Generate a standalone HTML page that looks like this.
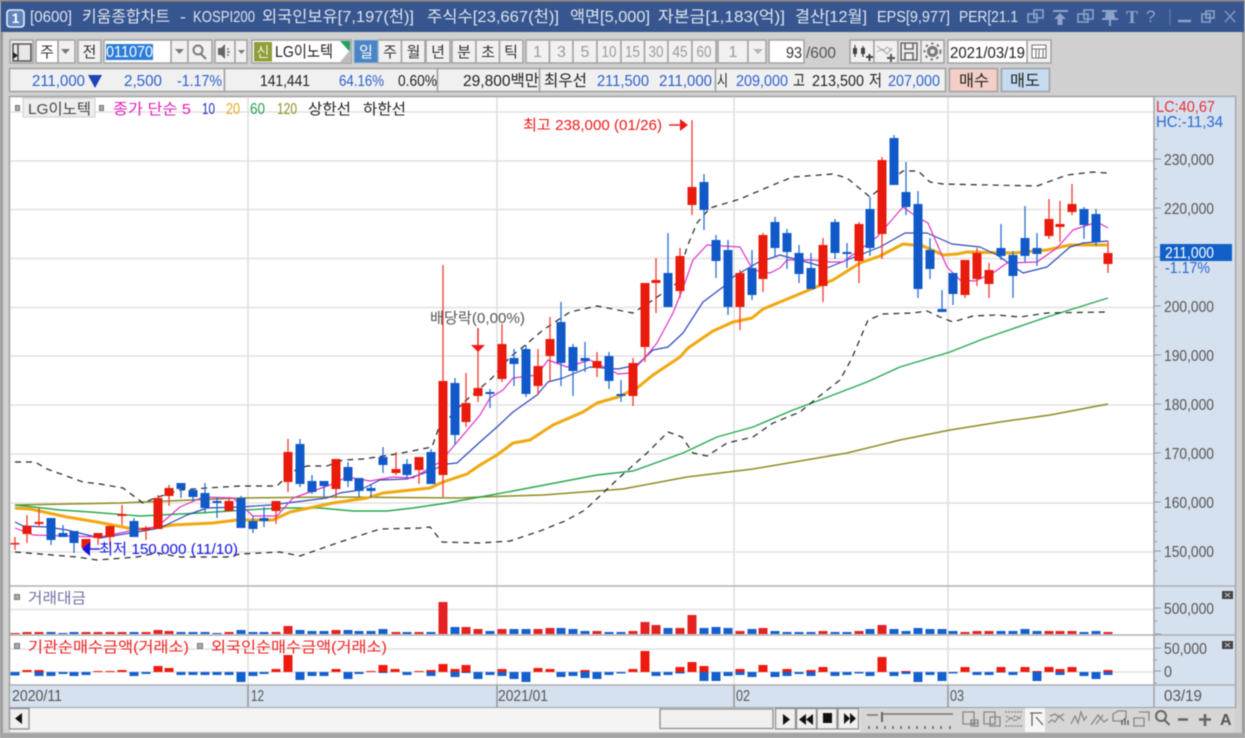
<!DOCTYPE html>
<html><head><meta charset="utf-8"><title>키움종합차트</title>
<style>
html,body{margin:0;padding:0;background:#d0d0d0;width:1245px;height:738px;overflow:hidden}
svg{display:block;filter:blur(.4px);font-size:16px}
text{font-family:"Liberation Sans","Noto Sans CJK KR",sans-serif}
.l{fill:none;stroke-linejoin:round}
</style></head><body>
<svg width="1245" height="738" viewBox="0 0 1245 738" xmlns="http://www.w3.org/2000/svg">
<rect width="1245" height="738" fill="#d0d0d0"/>
<rect x="0" y="0" width="3" height="738" fill="#9c9c9c"/>
<rect x="1242" y="0" width="3" height="738" fill="#9c9c9c"/>
<rect x="0" y="733" width="1245" height="5" fill="#a4a4a4"/>
<rect width="1245" height="2" fill="#777"/>
<rect x="1" y="2" width="1243" height="30" fill="#37568f"/>
<!-- title -->
<rect x="7" y="10" width="17" height="17" rx="3" fill="#5f83bd" stroke="#e8eef6" stroke-width="1.6"/>
<text x="15.5" y="23" text-anchor="middle" fill="#fff" font-weight="bold" style="font-size:14px">1</text>
<g fill="#dde4f0">
<text x="30" y="22" textLength="42" lengthAdjust="spacingAndGlyphs">[0600]</text>
<text x="82" y="22" textLength="88" lengthAdjust="spacingAndGlyphs">키움종합차트</text>
<text x="180" y="22" textLength="6" lengthAdjust="spacingAndGlyphs">-</text>
<text x="193" y="22" textLength="62" lengthAdjust="spacingAndGlyphs">KOSPI200</text>
<text x="262" y="22" textLength="152" lengthAdjust="spacingAndGlyphs">외국인보유[7,197(천)]</text>
<text x="427" y="22" textLength="132" lengthAdjust="spacingAndGlyphs">주식수[23,667(천)]</text>
<text x="570" y="22" textLength="80" lengthAdjust="spacingAndGlyphs">액면[5,000]</text>
<text x="658" y="22" textLength="127" lengthAdjust="spacingAndGlyphs">자본금[1,183(억)]</text>
<text x="795" y="22" textLength="72" lengthAdjust="spacingAndGlyphs">결산[12월]</text>
<text x="877" y="22" textLength="73" lengthAdjust="spacingAndGlyphs">EPS[9,977]</text>
<text x="959" y="22" textLength="59" lengthAdjust="spacingAndGlyphs">PER[21.1</text>
</g>
<!-- title icons -->
<g fill="none" stroke="#8ea3cb" stroke-width="1.6">
<path d="M1034 10h9v8h-9zM1028 14h9v8h-9z"/>
<path d="M1053 11h15" stroke-width="2"/>
<path d="M1084 10h9v9h-9zM1078 14h10v8h-10z"/>
<path d="M1170 9v16" stroke="#6a82ae" stroke-width="1"/>
<path d="M1178 21h13" stroke-width="2.4"/>
<path d="M1206 11h8v7h-8zM1202 14h8v8h-8z"/>
<path d="M1225 11l10 11M1235 11l-10 11" stroke="#7f94bc"/>
</g>
<path d="M1060 13l6 6h-3.500v6h-5v-6h-3.500z" fill="#8ea3cb"/>
<path d="M1102 10h15v2h-3l1 6h3v2h-7v6h-2v-6h-7v-2h3l1-6h-4z" fill="#8ea3cb"/>
<text x="1126" y="23" fill="#8ea3cb" font-weight="bold" style="font-family:'Liberation Serif',serif;font-size:18px">T</text>
<text x="1146" y="22" fill="#8ea3cb" style="font-size:17px">?</text>

<!-- toolbar -->
<g fill="#f1f1f1" stroke="#a2a2a2" stroke-width="1.5">
<rect x="10" y="40" width="23" height="23"/>
<rect x="58" y="40" width="17" height="23"/>
<rect x="78" y="40" width="23" height="23"/>
<rect x="171" y="40" width="17" height="23"/>
<rect x="188" y="40" width="24" height="23"/>
<rect x="215" y="40" width="20" height="23"/>
<rect x="235" y="40" width="12" height="23"/>
<rect x="378" y="40" width="23.500" height="23"/>
<rect x="401.500" y="40" width="23.500" height="23"/>
<rect x="426" y="40" width="24" height="23"/>
<rect x="452" y="40" width="24" height="23"/>
<rect x="476" y="40" width="23.500" height="23"/>
<rect x="499.500" y="40" width="23.500" height="23"/>
<rect x="526" y="40" width="23.500" height="23"/>
<rect x="549.500" y="40" width="23.500" height="23"/>
<rect x="573" y="40" width="24" height="23"/>
<rect x="597" y="40" width="24" height="23"/>
<rect x="621" y="40" width="23.500" height="23"/>
<rect x="644.500" y="40" width="23.500" height="23"/>
<rect x="668" y="40" width="24" height="23"/>
<rect x="692" y="40" width="24" height="23"/>
<rect x="718" y="40" width="30" height="23"/>
<rect x="748" y="40" width="18" height="23"/>
<rect x="850" y="40" width="24" height="23"/>
<rect x="874" y="40" width="24" height="23"/>
<rect x="898" y="40" width="23" height="23"/>
<rect x="921" y="40" width="23" height="23"/>
<rect x="1027" y="40" width="24" height="23"/>
</g>
<g fill="#fff" stroke="#a2a2a2" stroke-width="1.5">
<rect x="36" y="40" width="22" height="23"/>
<rect x="104" y="40" width="67" height="23"/>
<rect x="252" y="40" width="99" height="23"/>
<rect x="769" y="40" width="35" height="23"/>
<rect x="948" y="40" width="79" height="23"/>
</g>
<rect x="354" y="40" width="24" height="23" fill="#4a86c6" stroke="#9fb8d4"/>
<rect x="106" y="44" width="47" height="16" fill="#2d7cd8"/>
<text x="106" y="57" textLength="47" lengthAdjust="spacingAndGlyphs" fill="#fff">011070</text>
<rect x="254" y="42" width="18" height="19.500" fill="#8f9e38"/>
<text x="263" y="57" text-anchor="middle" fill="#f1f3d8" style="font-size:14px">신</text>
<path d="M340 41h10v11z" fill="#1fa35b"/><path d="M350 50v12h-10z" fill="#bcbcbc"/>
<text x="275" y="57" textLength="58" lengthAdjust="spacingAndGlyphs" fill="#222">LG이노텍</text>
<g fill="#333" text-anchor="middle" style="font-size:15px">
<text x="47" y="57">주</text><text x="89.500" y="57">전</text>
<text x="390" y="57">주</text><text x="413.500" y="57">월</text><text x="438" y="57">년</text>
<text x="464" y="57">분</text><text x="488" y="57">초</text><text x="511" y="57">틱</text>
</g>
<text x="366" y="57" text-anchor="middle" fill="#fff" style="font-size:15px">일</text>
<g fill="#9a9a9a" text-anchor="middle">
<text x="537.500" y="57">1</text><text x="561.500" y="57">3</text><text x="585" y="57">5</text>
<text x="609" y="57" textLength="15" lengthAdjust="spacingAndGlyphs">10</text>
<text x="632.500" y="57" textLength="15" lengthAdjust="spacingAndGlyphs">15</text>
<text x="656" y="57" textLength="15" lengthAdjust="spacingAndGlyphs">30</text>
<text x="680" y="57" textLength="15" lengthAdjust="spacingAndGlyphs">45</text>
<text x="704" y="57" textLength="15" lengthAdjust="spacingAndGlyphs">60</text>
<text x="733" y="57">1</text>
</g>
<text x="786" y="58" textLength="16" lengthAdjust="spacingAndGlyphs" fill="#333">93</text>
<text x="806" y="58" textLength="30" lengthAdjust="spacingAndGlyphs" fill="#555">/600</text>
<text x="950" y="58" textLength="75" lengthAdjust="spacingAndGlyphs" fill="#222">2021/03/19</text>
<g fill="#777">
<path d="M61 49h9l-4.500 5z"/><path d="M175 49h9l-4.500 5z"/><path d="M238 50h7l-3.500 4z"/>
<path d="M753 49h10l-5 5z" fill="#b5b5b5"/>
</g>
<!-- search -->
<g fill="none" stroke="#7c7c7c" stroke-width="2">
<circle cx="198" cy="50" r="4.500"/><path d="M201 54l5 5"/>
</g>
<!-- speaker -->
<path d="M218 48h3l4-4v15l-4-4h-3z" fill="#666"/><path d="M227 49h2M227 52h3M227 55h2" stroke="#777" stroke-width="1.500"/>
<!-- panel icon -->
<path d="M13 44h18v17h-18z M18 44v17" fill="#e8e8e8" stroke="#555" stroke-width="1.600"/>
<path d="M13 52l5 3.500-5 3.500z" fill="#222"/>
<!-- tool icons -->
<path d="M855 45v12M863 46v11" stroke="#444" stroke-width="1.200"/>
<path d="M853 48h4v6h-4zM861 48h4v6h-4z" fill="#444"/>
<path d="M866 57h7M869.500 54v7" stroke="#444" stroke-width="2"/>
<path d="M877 46l6 5 4-4 5 4M877 52l5-3 5 5 5-6" fill="none" stroke="#aaa" stroke-width="1"/>
<path d="M887 58h8M891 54v8" stroke="#555" stroke-width="2"/>
<path d="M901 43h16v17h-16z M905 43v6h8v-6 M905 60v-7h8v7" fill="none" stroke="#666" stroke-width="1.600"/>
<circle cx="932.500" cy="51.500" r="5.500" fill="#7a7a7a"/><circle cx="932.500" cy="51.500" r="8" fill="none" stroke="#7a7a7a" stroke-width="2" stroke-dasharray="2.500 3.500"/><circle cx="932.500" cy="51.500" r="2.300" fill="#eee"/>
<path d="M1032 45h14v13h-14z M1032 49h14M1036 49v9M1039 49v9M1043 49v9" fill="#fff" stroke="#777" stroke-width="1.100"/>

<!-- info row -->
<g fill="#f0f0f0" stroke="#a0a0a0" stroke-width="1.500">
<rect x="9.500" y="68.500" width="215" height="23"/>
<rect x="224.500" y="68.500" width="213" height="23"/>
<rect x="437.500" y="68.500" width="102" height="23"/>
<rect x="539.500" y="68.500" width="176" height="23"/>
<rect x="715.500" y="68.500" width="230" height="23"/>
<rect x="949.500" y="68.500" width="48" height="23" fill="#f3cfc8"/>
<rect x="1001.500" y="68.500" width="48" height="23" fill="#c5dcf0"/>
</g>
<g fill="#2a5fcf">
<text x="32" y="86" textLength="53" lengthAdjust="spacingAndGlyphs">211,000</text>
<text x="124" y="86" textLength="38" lengthAdjust="spacingAndGlyphs">2,500</text>
<text x="177" y="86" textLength="45" lengthAdjust="spacingAndGlyphs">-1.17%</text>
<text x="339" y="86" textLength="45" lengthAdjust="spacingAndGlyphs">64.16%</text>
<text x="597" y="86" textLength="52" lengthAdjust="spacingAndGlyphs">211,500</text>
<text x="659" y="86" textLength="53" lengthAdjust="spacingAndGlyphs">211,000</text>
<text x="736" y="86" textLength="52" lengthAdjust="spacingAndGlyphs">209,000</text>
<text x="888" y="86" textLength="52" lengthAdjust="spacingAndGlyphs">207,000</text>
</g>
<g fill="#222">
<text x="260" y="86" textLength="50" lengthAdjust="spacingAndGlyphs">141,441</text>
<text x="398" y="86" textLength="39" lengthAdjust="spacingAndGlyphs">0.60%</text>
<text x="463" y="86" textLength="76" lengthAdjust="spacingAndGlyphs">29,800백만</text>
<text x="544" y="86" textLength="43" lengthAdjust="spacingAndGlyphs">최우선</text>
<text x="717" y="86" textLength="11" lengthAdjust="spacingAndGlyphs">시</text>
<text x="793" y="86" textLength="12" lengthAdjust="spacingAndGlyphs">고</text>
<text x="812" y="86" textLength="52" lengthAdjust="spacingAndGlyphs">213,500</text>
<text x="869" y="86" textLength="13" lengthAdjust="spacingAndGlyphs">저</text>
<text x="959" y="86" textLength="30" lengthAdjust="spacingAndGlyphs">매수</text>
<text x="1010" y="86" textLength="30" lengthAdjust="spacingAndGlyphs">매도</text>
</g>
<path d="M88 75h14l-7 13z" fill="#1c45b8"/>

<!-- chart frame -->
<rect x="9.500" y="96.500" width="1226" height="611" fill="#fff" stroke="#a0a0a0" stroke-width="1.500"/>
<rect x="1154" y="97" width="81" height="610" fill="#d6e1ef"/>
<rect x="10" y="685" width="1144" height="22" fill="#d6e1ef"/>
<g stroke="#e2e2e2" stroke-width="1.500" fill="none">
<path d="M10 112H1154M10 161H1154M10 209.500H1154M10 258.500H1154M10 307.500H1154M10 356H1154M10 405H1154M10 454H1154M10 503H1154M10 552H1154"/>
<path d="M10 609.500H1154M10 649H1154M10 672H1154" stroke="#e0e0e0"/>
<path d="M248 97V685M497 97V685M734 97V685M948 97V685" stroke="#dedede"/>
</g>

<!-- lines -->
<polyline class="l" stroke="#8c8c20" stroke-width="1.500" points="15,505 120,503 240,498 330,497 460,498 480,497 543,495 623,489 687,477 753,469 847,453 900,440 950,430 1000,422 1050,415 1108,404"/>
<polyline class="l" stroke="#28a850" stroke-width="1.400" points="15,505 60,510 90,512 140,516 200,513 245,510 283,508 320,508 353,511 387,511 413,508 447,503 480,497 513,491 597,475 633,471 683,453 717,437 753,427 793,410 820,400 867,382 900,367 950,352 983,339 1047,317 1108,298"/>
<polyline class="l" stroke="#f0a810" stroke-width="3" points="15,508 30,509 67,517 97,522 133,529 147,529 173,525 213,523 237,520 273,520 290,512 333,503 367,498 383,493 430,488 443,482 467,474 480,465 497,455 513,443 530,440 553,425 583,412 597,403 618,397 637,388 653,375 680,357 688,348 713,331 733,322 752,318 763,309 797,295 833,280 860,263 880,256 903,244 923,246 943,255 957,254 967,252 1013,253 1047,250 1070,245 1107,245"/>
<polyline class="l" stroke="#3048b8" stroke-width="1.200" points="15,522 23,526 47,527 67,530 100,538 143,531 160,528 187,515 207,508 240,507 270,505 287,503 327,498 340,493 360,490 380,480 407,479 427,472 447,464 457,463 480,442 497,427 513,412 537,395 548,382 563,378 590,367 618,369 637,365 653,350 668,347 683,333 703,302 723,287 733,277 757,263 780,255 810,263 827,268 847,260 880,247 905,233 927,233 952,244 980,247 997,255 1023,273 1047,267 1070,247 1083,243 1108,241"/>
<polyline class="l" stroke="#e030c8" stroke-width="1.200" points="15,528 33,535 67,536 100,537 140,529 157,527 180,507 203,497 233,498 253,516 277,516 293,498 330,485 347,477 370,481 393,477 413,478 440,462 453,447 480,415 490,398 503,390 513,378 537,375 548,360 567,367 590,360 618,374 630,373 643,360 657,343 673,313 683,288 693,260 707,245 740,247 753,270 770,273 780,268 787,260 813,260 830,262 843,262 877,237 903,207 917,217 928,223 947,267 960,280 975,281 993,273 1007,263 1037,262 1057,248 1073,230 1097,222 1108,228"/>
<g class="l" stroke="#222" stroke-width="1.200" stroke-dasharray="6 5">
<polyline class="l" points="15,462 35,462 47,469 83,482 100,484 123,488 143,503 155,498 180,490 207,488 240,486 277,486 280,483 297,469 307,466 327,466 343,460 363,459 397,454 432,447 438,430 463,403 492,378 510,357 523,347 543,330 570,312 597,306 633,313 653,300 677,283 687,247 697,223 710,208 740,199 780,182 793,177 833,174 847,178 870,197 887,183 903,171 918,171 930,182 943,184 1037,186 1067,175 1093,172 1107,173"/>
<polyline class="l" points="15,552 77,557 97,560 137,557 157,553 180,557 227,557 240,554 280,552 300,556 337,543 380,529 420,528 430,527 442,542 480,543 510,541 540,531 565,521 585,510 620,477 647,453 668,432 682,437 693,453 707,456 727,443 753,437 773,423 800,412 817,398 840,380 852,358 868,320 883,314 913,313 927,311 940,317 953,322 973,316 997,315 1020,317 1047,313 1107,312"/>
</g>

<!-- candles: wicks -->
<path fill="none" stroke="#ee3b30" stroke-width="1.300" d="M15 537V550M27 515V543M39 508V527M86 539V553M98 533V545M110 526V547M122 505V525M146 526V540M158 495V529M169 485V506M229 497V511M276 501V524M288 439V492M336 459V498M396 452V475M419 457V484M443 265V497M466 373V427M478 346V402M502 324V382M538 349V395M550 317V382M597 352V377M633 358V406M645 283V362M656 258V313M680 248V298M692 120V215M740 270V330M763 233V292M823 238V302M859 222V283M882 157V259M965 260V298M977 248V286M989 263V298M1049 199V239M1060 201V242M1072 184V215M1108 241V273"/>
<path fill="none" stroke="#2a70d0" stroke-width="1.300" d="M51 518V545M63 525V537M74 531V553M134 518V537M181 483V498M193 488V501M205 483V512M217 497V518M241 496V528M253 516V533M264 507V527M300 439V487M312 475V494M324 481V497M348 462V487M359 478V497M371 485V498M383 447V473M407 459V478M431 449V484M455 378V445M490 389V408M514 349V386M526 345V397M561 302V386M573 344V396M585 342V372M609 352V389M621 380V402M668 233V307M704 174V230M716 235V278M728 240V315M752 250V300M775 217V257M787 229V269M799 245V283M811 253V289M835 219V259M847 243V268M870 197V256M894 135V185M906 162V215M918 191V298M930 238V279M942 290V312M953 273V305M1001 224V260M1013 251V298M1025 206V262M1037 233V266M1084 207V239M1096 209V246"/>
<!-- candles: bodies -->
<path fill="none" stroke="#e81b0c" stroke-width="9" d="M27 526V534M86 539V548M98 533V538M110 526V537M158 498V529M169 488V496M229 501V511M276 501V511M288 452V482M336 459V489M419 457V470M443 381V475M466 403V422M478 388V396M502 344V379M538 366V386M550 339V356M597 361V368M633 363V396M645 283V347M680 256V291M692 187V205M740 273V307M763 235V279M823 245V286M859 224V261M882 160V234M965 260V295M977 253V279M989 270V284M1049 219V236M1072 204V212M1108 253V264M15 543V544.500M39 522V524M122 514V516M146 528V530M396 469V473M656 280V283M1060 224V227"/>
<path fill="none" stroke="#1159c8" stroke-width="9" d="M51 518V540M63 533V537M74 531V543M134 521V537M181 483V489M193 490V497M205 493V508M217 501V503M241 498V528M253 521V529M264 518V521M300 444V484M312 481V492M324 481V486M348 467V481M359 478V491M371 488V491M383 457V465M407 464V475M431 452V484M455 383V435M490 392V394M514 358V364M526 349V394M561 322V363M573 347V371M585 358V361M609 356V381M621 394V396M668 273V307M704 182V210M716 240V261M728 250V307M752 268V295M775 222V248M787 233V252M799 253V274M811 268V289M835 222V253M847 252V254M870 209V248M894 138V185M906 192V207M918 204V289M930 250V269M942 309V312M953 273V294M1001 248V256M1013 255V276M1025 238V256M1037 248V254M1084 209V225M1096 214V242"/>

<!-- annotations -->
<text x="523" y="130" textLength="139" lengthAdjust="spacingAndGlyphs" fill="#f01818" style="font-size:15px">최고 238,000 (01/26)</text>
<path d="M669 125H682" stroke="#f01818" stroke-width="1.400"/><path d="M680 119l8 6-8 6z" fill="#f01818"/>
<text x="430" y="323" textLength="95" lengthAdjust="spacingAndGlyphs" fill="#555" style="font-size:15px">배당락(0,00%)</text>
<path d="M478 328V348" stroke="#f01818" stroke-width="1.400"/><path d="M471 345h14l-7 7z" fill="#f01818"/>
<text x="99" y="554" textLength="139" lengthAdjust="spacingAndGlyphs" fill="#1414e6" style="font-size:15px">최저 150,000 (11/10)</text>
<path d="M88 549H100" stroke="#1414e6" stroke-width="1.400"/><path d="M90 542l-8 7 8 7z" fill="#1414e6"/>

<!-- volume panel -->
<path fill="none" stroke="#e42222" stroke-width="9" d="M15 634V633M27 634V632M39 634V632M86 634V632M98 634V632M110 634V632M122 634V632M146 634V632M158 634V630M169 634V631M229 634V632M276 634V632M288 634V626M336 634V630M396 634V632M419 634V632M443 634V602M466 634V627M478 634V629M502 634V629M538 634V629M550 634V628M597 634V631M633 634V631M645 634V622M656 634V625M680 634V628M692 634V615M740 634V631M763 634V628M823 634V631M859 634V631M882 634V625M965 634V632M977 634V631M989 634V631M1049 634V631M1060 634V631M1072 634V631M1108 634V632"/>
<path fill="none" stroke="#1460cf" stroke-width="9" d="M51 634V632M63 634V633M74 634V632M134 634V632M181 634V632M193 634V632M205 634V632M217 634V633M241 634V630M253 634V632M264 634V632M300 634V630M312 634V631M324 634V631M348 634V630M359 634V631M371 634V631M383 634V629M407 634V632M431 634V632M455 634V627M490 634V631M514 634V629M526 634V629M561 634V628M573 634V629M585 634V631M609 634V632M621 634V632M668 634V628M704 634V628M716 634V627M728 634V628M752 634V629M775 634V631M787 634V632M799 634V632M811 634V632M835 634V632M847 634V632M870 634V629M894 634V629M906 634V631M918 634V628M930 634V629M942 634V629M953 634V631M1001 634V631M1013 634V631M1025 634V629M1037 634V631M1084 634V632M1096 634V631"/>
<!-- net panel -->
<path fill="none" stroke="#ee1a0e" stroke-width="9" d="M27 672V670M39 672V670M98 672V671M110 672V671M122 672V670M158 672V666M169 672V668M276 672V669M288 672V655M336 672V669M371 672V671M383 672V665M395 672V669M419 672V671M431 672V670M443 672V664M455 672V669M466 672V665M502 672V669M538 672V668M550 672V669M585 672V670M633 672V669M645 672V651M680 672V667M692 672V662M704 672V666M740 672V669M763 672V665M787 672V669M811 672V670M823 672V667M882 672V657M906 672V671M965 672V667M1001 672V667M1025 672V667M1037 672V671M1049 672V667M1060 672V669M1072 672V667M1108 672V670"/>
<path fill="none" stroke="#1460cf" stroke-width="9" d="M15 672V675.500M39 672V676M51 672V676M63 672V674M74 672V676M86 672V675M134 672V676M146 672V674M181 672V675M193 672V675M205 672V675M217 672V675M229 672V675M241 672V682M253 672V676M264 672V674M300 672V680M312 672V676M324 672V676M348 672V679M359 672V674M383 672V673M407 672V675M431 672V676M455 672V677M466 672V673M478 672V679M490 672V675M502 672V676M514 672V679M526 672V682M561 672V677M573 672V676M585 672V678M597 672V679M609 672V675M621 672V673.500M656 672V676M668 672V675M680 672V673.500M704 672V681M716 672V681M728 672V676M740 672V675M752 672V677M775 672V677M787 672V676M799 672V674M811 672V676M835 672V676M847 672V675M859 672V673.500M870 672V676M894 672V676M906 672V674M918 672V682M930 672V675M942 672V681M953 672V673.500M977 672V675M989 672V675M1001 672V672.500M1013 672V675M1037 672V681M1060 672V675M1084 672V676M1096 672V679M1108 672V675"/>

<!-- separators -->
<g stroke="#b0b0b0" stroke-width="1.500" fill="none">
<path d="M10 586H1235M10 635H1235M10 685H1235"/>
<path d="M1154 97V707" stroke="#a4a4a4"/>
<path d="M248 685V707M497 685V707M734 685V707M948 685V707" stroke="#959595"/>
</g>
<!-- axis ticks -->
<path fill="none" stroke="#999" stroke-width="1" d="M1154 139.500h3M1154 149.500h3M1154 159h7M1154 169h3M1154 179h3M1154 188.500h3M1154 198.500h3M1154 208h7M1154 218h3M1154 228h3M1154 237.500h3M1154 247.500h3M1154 257h7M1154 267h3M1154 277h3M1154 286.500h3M1154 296.500h3M1154 306h7M1154 316h3M1154 326h3M1154 335.500h3M1154 345.500h3M1154 355h7M1154 365h3M1154 375h3M1154 384.500h3M1154 394.500h3M1154 404h7M1154 414h3M1154 424h3M1154 433.500h3M1154 443.500h3M1154 453h7M1154 463h3M1154 473h3M1154 482.500h3M1154 492.500h3M1154 502h7M1154 512h3M1154 522h3M1154 531.500h3M1154 541.500h3M1154 551h7M1154 561h3M1154 571h3M1154 608h7M1154 621h3M1154 634h7M1154 648h7M1154 660h3M1154 671h7M1154 683h3"/>

<!-- axis labels -->
<g fill="#555">
<text x="1164" y="165" textLength="50" lengthAdjust="spacingAndGlyphs">230,000</text>
<text x="1164" y="214" textLength="50" lengthAdjust="spacingAndGlyphs">220,000</text>
<text x="1164" y="312" textLength="50" lengthAdjust="spacingAndGlyphs">200,000</text>
<text x="1164" y="361" textLength="50" lengthAdjust="spacingAndGlyphs">190,000</text>
<text x="1164" y="410" textLength="50" lengthAdjust="spacingAndGlyphs">180,000</text>
<text x="1164" y="459" textLength="50" lengthAdjust="spacingAndGlyphs">170,000</text>
<text x="1164" y="508" textLength="50" lengthAdjust="spacingAndGlyphs">160,000</text>
<text x="1164" y="557" textLength="50" lengthAdjust="spacingAndGlyphs">150,000</text>
<text x="1164" y="614" textLength="50" lengthAdjust="spacingAndGlyphs">500,000</text>
<text x="1164" y="654" textLength="43" lengthAdjust="spacingAndGlyphs">50,000</text>
<text x="1164" y="677" textLength="8" lengthAdjust="spacingAndGlyphs">0</text>
<text x="1164" y="701" textLength="38" lengthAdjust="spacingAndGlyphs">03/19</text>
<text x="12" y="701" textLength="50" lengthAdjust="spacingAndGlyphs">2020/11</text>
<text x="251" y="701" textLength="13" lengthAdjust="spacingAndGlyphs">12</text>
<text x="498" y="701" textLength="50" lengthAdjust="spacingAndGlyphs">2021/01</text>
<text x="736" y="701" textLength="14" lengthAdjust="spacingAndGlyphs">02</text>
<text x="950" y="701" textLength="14" lengthAdjust="spacingAndGlyphs">03</text>
</g>
<text x="1156" y="112" textLength="59" lengthAdjust="spacingAndGlyphs" fill="#e83030">LC:40,67</text>
<text x="1156" y="127" textLength="67" lengthAdjust="spacingAndGlyphs" fill="#2a68d0">HC:-11,34</text>
<rect x="1160" y="244" width="72" height="17" fill="#1160c8"/>
<text x="1165" y="258" textLength="49" lengthAdjust="spacingAndGlyphs" fill="#fff">211,000</text>
<text x="1165" y="273" textLength="45" lengthAdjust="spacingAndGlyphs" fill="#2a68d0">-1.17%</text>
<rect x="1222" y="591" width="11" height="8" fill="#444"/><path d="M1225 593l5 4M1230 593l-5 4" stroke="#ccc"/>
<rect x="1222" y="641" width="11" height="8" fill="#444"/><path d="M1225 643l5 4M1230 643l-5 4" stroke="#ccc"/>

<!-- legends -->
<rect x="23" y="98" width="72" height="19" fill="#eeeeee" stroke="#cfcfcf"/>
<g fill="#aaa" stroke="#777">
<rect x="15.500" y="105.500" width="4" height="5"/><rect x="99.500" y="105.500" width="4" height="5"/>
<rect x="14.500" y="594.500" width="5" height="5"/><rect x="14.500" y="643.500" width="5" height="5"/><rect x="197.500" y="643.500" width="5" height="5"/>
</g>
<text x="28" y="114" textLength="63" lengthAdjust="spacingAndGlyphs" fill="#444" style="font-size:15px">LG이노텍</text>
<text x="113" y="114" textLength="78" lengthAdjust="spacingAndGlyphs" fill="#e020b8" style="font-size:15px">종가 단순 5</text>
<text x="202" y="114" textLength="13" lengthAdjust="spacingAndGlyphs" fill="#2030b8">10</text>
<text x="226" y="114" textLength="14" lengthAdjust="spacingAndGlyphs" fill="#e8a820">20</text>
<text x="250" y="114" textLength="15" lengthAdjust="spacingAndGlyphs" fill="#20a048">60</text>
<text x="277" y="114" textLength="20" lengthAdjust="spacingAndGlyphs" fill="#909020">120</text>
<text x="308" y="114" textLength="43" lengthAdjust="spacingAndGlyphs" fill="#222" style="font-size:15px">상한선</text>
<text x="363" y="114" textLength="43" lengthAdjust="spacingAndGlyphs" fill="#222" style="font-size:15px">하한선</text>
<text x="28" y="603" textLength="58" lengthAdjust="spacingAndGlyphs" fill="#7070a8" style="font-size:15px">거래대금</text>
<text x="28" y="652" textLength="161" lengthAdjust="spacingAndGlyphs" fill="#f02020" style="font-size:15px">기관순매수금액(거래소)</text>
<text x="211" y="652" textLength="176" lengthAdjust="spacingAndGlyphs" fill="#f02020" style="font-size:15px">외국인순매수금액(거래소)</text>

<!-- scroll row -->
<rect x="10" y="708" width="1225" height="24" fill="#f4f4f4"/>
<rect x="860" y="708" width="375" height="24" fill="#d6d6d6"/>
<g fill="#f0f0f0" stroke="#8e8e8e" stroke-width="1.300">
<rect x="9.500" y="708.500" width="19.500" height="20.500"/>
<rect x="660" y="709" width="113" height="19.500"/>
<rect x="775.500" y="708.500" width="20" height="20.500"/>
<rect x="796.500" y="708.500" width="20" height="20.500"/>
<rect x="817" y="708.500" width="20" height="20.500"/>
<rect x="838" y="708.500" width="20.500" height="20.500"/>
</g>
<path d="M22 713v11l-7-5.500z" fill="#111"/>
<path d="M783 714v11l7-5.500z" fill="#111"/>
<path d="M806 714v11l-7-5.500zM813 714v11l-7-5.500z" fill="#111"/>
<rect x="823" y="713" width="9" height="10" fill="#111"/>
<path d="M844 713v11l6-5.500zM850 713v11l6-5.500z" fill="#111"/>
<path d="M867 715H878M883 714H953" stroke="#777" stroke-width="1.500"/>
<path d="M882 712V722" stroke="#666" stroke-width="2"/>
<path d="M869 726v3M877 726v3M885 726v3M893 726v3M901 726v3M909 726v3M917 726v3M925 726v3M933 726v3M941 726v3M950 726v3" stroke="#555" stroke-width="1.300"/>
<!-- bottom icons -->
<rect x="1025" y="708" width="20" height="24" fill="#f6f6f6"/>
<g fill="none" stroke="#888" stroke-width="1.300">
<path d="M963 712h11v12h-11zM971 720h7v6h-7zM971 723h7M974.500 720v6"/>
<path d="M984 712h11v12h-11zM990 717h10v9h-10z"/>
<path d="M1005 712h17M1005 726h17M1006 722l5-4 4 3 6-5M1006 716l5 3 4-3 6 3" stroke-dasharray="2 1"/>
<path d="M1030 713h12M1032 713v13M1036 717l7 8" stroke="#666"/>
<path d="M1048 723l4-3 3 2 4-6 5 5M1050 716l5-2 4 3 5-3"/>
<path d="M1071 724l4-8 3 7 3-11 3 8 3-4"/>
<path d="M1091 725l7-10 6 7 4-3M1096 724l7-9"/>
<path d="M1113 720v-6l5-3h8v7l-4 3h-9z"/>
<path d="M1134 718h10v8h-10zM1139 712h10v9"/>
</g>
<path d="M1122 725v-5M1125 725v-7M1128 725v-5" stroke="#555" stroke-width="1.300"/>
<g fill="none" stroke="#666" stroke-width="2">
<circle cx="1161" cy="716" r="5"/><path d="M1164.500 720l5 5"/>
</g>
<path d="M1178 719.500h10M1199 719.500h12M1205 714v12" stroke="#666" stroke-width="2.600"/>
<text x="1220" y="725" fill="#555" font-weight="bold">A</text>
</svg>
</body></html>
